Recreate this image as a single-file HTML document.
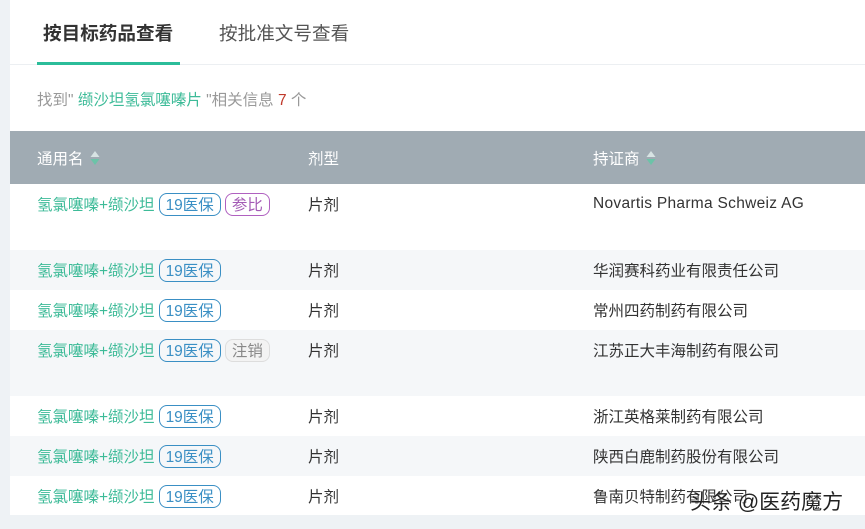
<!DOCTYPE html>
<html><head><meta charset="utf-8"><style>
*{margin:0;padding:0;box-sizing:border-box}
body{width:865px;height:529px;background:#eef2f5;font-family:"Liberation Sans","Noto Sans CJK SC",sans-serif;position:relative;overflow:hidden}
.panel{position:absolute;left:10px;top:0;width:855px;height:515px;background:#fff}
.tab{position:absolute;top:19px;font-size:18.6px}
.line{position:absolute;left:10px;top:64px;width:855px;height:1px;background:#eceff2}
.ul{position:absolute;left:37px;top:62px;width:143px;height:3px;background:#2bbd9a}
.found{position:absolute;left:37px;top:88px;font-size:15.5px;color:#999}
.hdr{position:absolute;left:10px;top:131px;width:855px;height:53px;background:#a0abb3;color:#fff;font-size:15.5px}
.hdr span{position:absolute;top:16px;display:flex;align-items:center}
.sort{margin-left:6px;width:10px;height:16px;display:block}
.row{position:absolute;left:10px;width:855px;font-size:15.5px;color:#333}
.row .c{position:absolute;top:8px;height:24px;display:flex;align-items:center;white-space:nowrap}
.g{background:#f5f7f9}
.n{color:#3dbb98}
.tg{display:inline-flex;align-items:center;border:1.3px solid #3a8fc4;color:#3a8fc4;border-radius:8px;padding:0 6px;height:23px;font-size:15.5px;margin-left:4px}
.pk{border-color:#b061c0;color:#a35bb5}
.gr{border-color:#ddd;color:#888;background:#f3f3f3}
.wm{position:absolute;left:690px;top:486px;font-size:21px;color:#222;text-shadow:0 0 2px #fff}
</style></head><body>
<div class="panel"></div>
<div class="tab" style="left:43px;font-weight:bold;color:#333">按目标药品查看</div>
<div class="tab" style="left:219px;color:#555">按批准文号查看</div>
<div class="line"></div><div class="ul"></div>
<div class="found">找到" <span class="n">缬沙坦氢氯噻嗪片</span> "相关信息 <span style="color:#c0392b">7</span> 个</div>
<div class="hdr">
<span style="left:27px">通用名<svg class="sort" viewBox="0 0 10 16"><path d="M5 1L9.5 7H0.5z" fill="#d7e3e3"/><path d="M5 15L9.5 9H0.5z" fill="#6cc3a8"/></svg></span>
<span style="left:298px">剂型</span>
<span style="left:583px">持证商<svg class="sort" viewBox="0 0 10 16"><path d="M5 1L9.5 7H0.5z" fill="#d7e3e3"/><path d="M5 15L9.5 9H0.5z" fill="#6cc3a8"/></svg></span>
</div>
<div class="row" style="top:184px;height:66px"><span class="c" style="left:27px"><span class="n">氢氯噻嗪+缬沙坦</span><span class="tg">19医保</span><span class="tg pk">参比</span></span><span class="c" style="left:298px">片剂</span><span class="c" style="left:583px;letter-spacing:0.3px">Novartis Pharma Schweiz AG</span></div>
<div class="row g" style="top:250px;height:40px"><span class="c" style="left:27px"><span class="n">氢氯噻嗪+缬沙坦</span><span class="tg">19医保</span></span><span class="c" style="left:298px">片剂</span><span class="c" style="left:583px">华润赛科药业有限责任公司</span></div>
<div class="row" style="top:290px;height:40px"><span class="c" style="left:27px"><span class="n">氢氯噻嗪+缬沙坦</span><span class="tg">19医保</span></span><span class="c" style="left:298px">片剂</span><span class="c" style="left:583px">常州四药制药有限公司</span></div>
<div class="row g" style="top:330px;height:66px"><span class="c" style="left:27px"><span class="n">氢氯噻嗪+缬沙坦</span><span class="tg">19医保</span><span class="tg gr">注销</span></span><span class="c" style="left:298px">片剂</span><span class="c" style="left:583px">江苏正大丰海制药有限公司</span></div>
<div class="row" style="top:396px;height:40px"><span class="c" style="left:27px"><span class="n">氢氯噻嗪+缬沙坦</span><span class="tg">19医保</span></span><span class="c" style="left:298px">片剂</span><span class="c" style="left:583px">浙江英格莱制药有限公司</span></div>
<div class="row g" style="top:436px;height:40px"><span class="c" style="left:27px"><span class="n">氢氯噻嗪+缬沙坦</span><span class="tg">19医保</span></span><span class="c" style="left:298px">片剂</span><span class="c" style="left:583px">陕西白鹿制药股份有限公司</span></div>
<div class="row" style="top:476px;height:39px"><span class="c" style="left:27px"><span class="n">氢氯噻嗪+缬沙坦</span><span class="tg">19医保</span></span><span class="c" style="left:298px">片剂</span><span class="c" style="left:583px">鲁南贝特制药有限公司</span></div>
<div class="wm">头条 @医药魔方</div>
</body></html>
